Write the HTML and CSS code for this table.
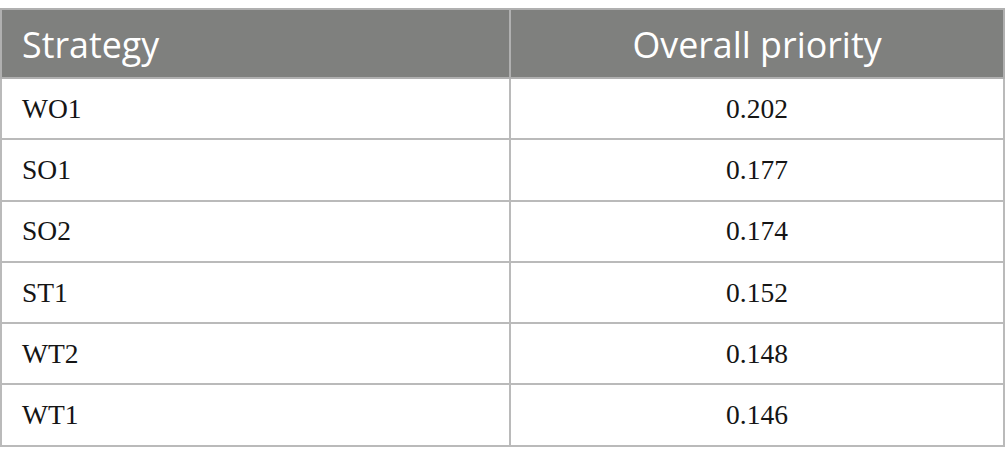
FILE: index.html
```html
<!DOCTYPE html>
<html>
<head>
<meta charset="utf-8">
<link rel="stylesheet" href="styles.css">
</head>
<body>
<table class="tbl">
  <thead>
    <tr class="head"><th class="c1">Strategy</th><th class="c2">Overall priority</th></tr>
  </thead>
  <tbody>
    <tr><td class="c1">WO1</td><td class="c2">0.202</td></tr>
    <tr><td class="c1">SO1</td><td class="c2">0.177</td></tr>
    <tr><td class="c1">SO2</td><td class="c2">0.174</td></tr>
    <tr><td class="c1">ST1</td><td class="c2">0.152</td></tr>
    <tr><td class="c1">WT2</td><td class="c2">0.148</td></tr>
    <tr><td class="c1">WT1</td><td class="c2">0.146</td></tr>
  </tbody>
</table>
</body>
</html>
```
FILE: styles.css
```css
html, body { background: #fff; }
body { margin: 8px 0 0 0; }
.tbl {
  border-collapse: collapse;
  width: 1005px;
  table-layout: fixed;
}
.tbl th, .tbl td {
  border: 2px solid #bababa;
  padding: 0 20px;
}
.head th {
  background: #7f807e;
  color: #fff;
  font-family: "Open Sans", sans-serif;
  font-weight: 400;
  font-size: 35.8px;
  height: 67px;
  border-color: #b0b0b0;
}
.tbl td {
  font-family: "Liberation Serif", serif;
  font-size: 27.5px;
  color: #151515;
  height: 59.3px;
}
.c1 { width: 467px; text-align: left; }
.c2 { text-align: center; }
```
